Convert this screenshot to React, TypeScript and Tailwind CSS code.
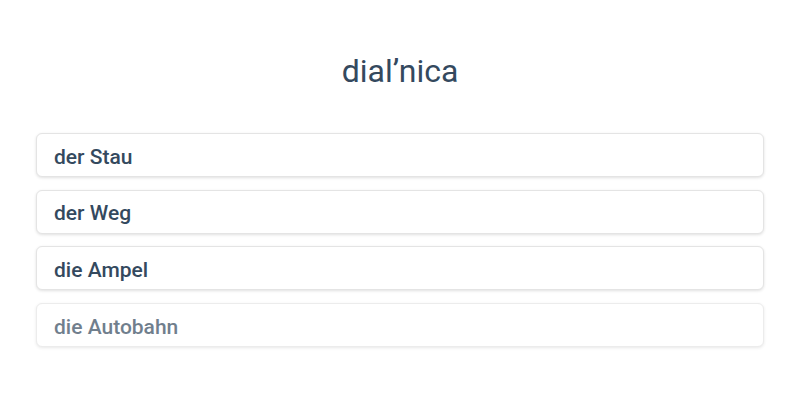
const OPTIONS = [
  { label: "der Stau", faded: false },
  { label: "der Weg", faded: false },
  { label: "die Ampel", faded: false },
  { label: "die Autobahn", faded: true },
];

export default function App() {
  return (
    <div className="min-h-[400px] bg-white px-9 pt-[51px] text-[#34495e]" style={{ fontFamily: "Roboto, sans-serif" }}>
      <h1 className="text-center text-[32px] leading-10">dialʼnica</h1>
      <div className="mt-[42px] flex flex-col gap-[12.67px]">
        {OPTIONS.map(o => (
          <button
            key={o.label}
            className={`h-[44px] w-full rounded-md border border-[#e4e4e4] bg-white px-[17px] pt-[5px] text-left text-[21px] font-medium shadow-[0_1px_3px_rgba(0,0,0,0.12)] ${
              o.faded ? "opacity-70" : ""
            }`}
          >
            {o.label}
          </button>
        ))}
      </div>
    </div>
  );
}
